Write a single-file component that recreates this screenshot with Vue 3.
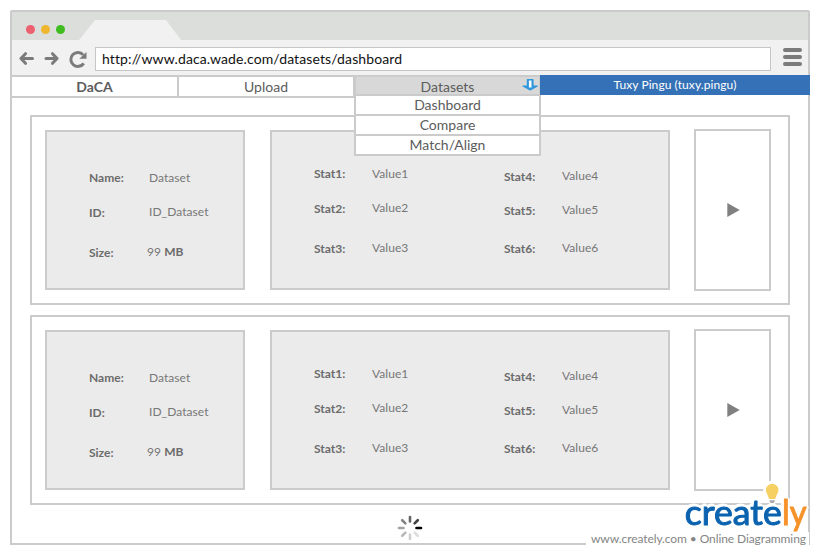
<script setup>
const menu = ['Dashboard', 'Compare', 'Match/Align']
const datasets = [1, 2]
const spokes = ['#000000', '#dddddd', '#cfcfcf', '#b9b9b9', '#a2a2a2', '#858585', '#666666', '#404040']
const statLabelsLeft = ['Stat1:', 'Stat2:', 'Stat3:']
const statValuesLeft = ['Value1', 'Value2', 'Value3']
const statLabelsRight = ['Stat4:', 'Stat5:', 'Stat6:']
const statValuesRight = ['Value4', 'Value5', 'Value6']
</script>

<template>
  <div class="page">
    <div class="browser">
      <header class="titlebar">
        <div class="lights"><i class="red"></i><i class="amber"></i><i class="green"></i></div>
        <div class="tab"></div>
      </header>
      <div class="toolbar">
        <svg class="nav-icons" width="83" height="35" viewBox="0 0 83 35" fill="none" stroke="#7b7b7b" stroke-width="3">
          <path d="M20.5 18.5H9M13.5 13.7L8.9 18.5L13.5 23.3" stroke-linejoin="round" stroke-linecap="round" />
          <path d="M34 18.5H45M40.5 13.7L45.1 18.5L40.5 23.3" stroke-linejoin="round" stroke-linecap="round" />
          <path d="M71.2 14.9A7 7 0 1 0 71.7 23.3" />
          <path d="M74.5 12V18.8H67.3Z" fill="#7b7b7b" stroke="none" />
        </svg>
        <div class="url">http://www.daca.wade.com/datasets/dashboard</div>
        <div class="burger"><i></i><i></i><i></i></div>
      </div>
      <nav class="menubar">
        <div class="item brand">DaCA</div>
        <div class="item upload">Upload</div>
        <div class="drop">
          <div class="drop-head">
            Datasets
            <svg class="arrow" width="18" height="14" viewBox="0 0 18 14">
              <path d="M6.4 1.6H12V8H16.4L9.2 12L2 8H6.4Z" fill="#2f97dc" stroke="#2f97dc" stroke-width="1.2" stroke-linejoin="round" />
              <path d="M7.9 2.5H10.5V9.5H7.9Z" fill="#fff" />
            </svg>
          </div>
          <div class="drop-list">
            <div v-for="m in menu" :key="m" class="drop-item">{{ m }}</div>
          </div>
        </div>
        <div class="user">Tuxy Pingu (tuxy.pingu)</div>
      </nav>
      <main class="content">
        <section v-for="d in datasets" :key="d" class="card">
          <div class="panel info">
            <div class="col labels"><span>Name:</span><span>ID:</span><span>Size:</span></div>
            <div class="col values"><span>Dataset</span><span>ID_Dataset</span><span class="size">99 <b>MB</b></span></div>
          </div>
          <div class="panel stats">
            <div class="col labels"><span v-for="s in statLabelsLeft" :key="s">{{ s }}</span></div>
            <div class="col values"><span v-for="s in statValuesLeft" :key="s">{{ s }}</span></div>
            <div class="col labels right"><span v-for="s in statLabelsRight" :key="s">{{ s }}</span></div>
            <div class="col values right"><span v-for="s in statValuesRight" :key="s">{{ s }}</span></div>
          </div>
          <div class="play">
            <svg width="13" height="14" viewBox="0 0 13 14"><path d="M0.3 0L12.7 7L0.3 14Z" fill="#808080" /></svg>
          </div>
        </section>
        <svg class="spinner" width="26" height="26" viewBox="-13 -13 26 26">
          <line v-for="(c, i) in spokes" :key="i" x1="6.5" y1="0" x2="11" y2="0" :stroke="c" stroke-width="2.6" stroke-linecap="round" :transform="`rotate(${i * 45})`" />
        </svg>
      </main>
    </div>
    <div class="watermark">
      <svg class="logo" width="130" height="56" viewBox="680 480 130 56">
        <path d="M766 490a6.2 6.2 0 0 1 12.4 0c0 3.5-2.4 5-3 9h-6.4c-.6-4-3-5.5-3-9Z" fill="#f6d062" />
        <path d="M769.3 500.3h5.8l-1.3 2.7h-3.2Z" fill="#a8a8a8" />
        <text x="684.8" y="525" class="word blue" textLength="97" lengthAdjust="spacingAndGlyphs">create</text>
        <text x="782" y="525" class="word orange" textLength="24.5" lengthAdjust="spacingAndGlyphs">ly</text>
      </svg>
      <div class="tagline">www.creately.com • Online Diagramming</div>
    </div>
  </div>
</template>

<style>
body { background: #fff; }
</style>

<style scoped>
* { box-sizing: border-box; }
.page { position: relative; width: 820px; height: 555px; padding: 10px; font-family: Lato, "Liberation Sans", sans-serif; color: #5c5c5c; overflow: hidden; }
.browser { width: 800px; height: 535px; border: 2px solid #cbcbcb; border-radius: 2px 2px 0 0; display: flex; flex-direction: column; }
.titlebar { height: 28px; flex: none; background: #dcdedb; display: flex; align-items: flex-end; }
.lights { display: flex; gap: 6px; padding: 0 0 6px 13.5px; width: 67px; }
.lights i { width: 9px; height: 9px; border-radius: 50%; }
.red { background: #ec6070; }
.amber { background: #eeb72f; }
.green { background: #3fbd20; }
.tab { width: 102px; height: 20px; background: #f1f1f1; clip-path: polygon(16px 0, 87px 0, 102px 100%, 0 100%); }
.toolbar { height: 35px; flex: none; background: #f1f1f1; display: flex; align-items: flex-start; }
.nav-icons { flex: none; }
.url { width: 676px; height: 24px; margin-top: 7px; border: 1px solid #c6c6c6; background: #fff; color: #111; font-size: 14px; letter-spacing: 0.12px; line-height: 22px; padding-left: 6px; white-space: nowrap; }
.burger { display: flex; flex-direction: column; gap: 3px; margin: 8px 0 0 12px; }
.burger i { width: 19px; height: 4px; border-radius: 2px; background: #7b7b7b; }
.menubar { height: 23px; flex: none; display: flex; align-items: flex-start; margin-right: -2px; font-size: 14px; text-align: center; }
.item { height: 23px; border: 2px solid #cbcbcb; border-left: 0; line-height: 20px; }
.brand { width: 167px; font-weight: 700; }
.upload { width: 176px; }
.drop { width: 187px; margin-left: -1px; position: relative; z-index: 2; }
.drop-head { height: 19px; border: 2px solid #cbcbcb; border-bottom: 0; background: #d8d8d8; line-height: 20px; position: relative; }
.arrow { position: absolute; right: 0; top: 1px; }
.drop-list { position: absolute; top: 19px; left: 0; width: 187px; height: 62px; border: 2px solid #cbcbcb; background: #fff; display: flex; flex-direction: column; }
.drop-item { height: 20px; line-height: 18px; border-bottom: 2px solid #cbcbcb; }
.drop-item:last-child { border: 0; }
.user { position: relative; z-index: 3; width: 270px; height: 20px; margin-left: -1px; background: #3571b6; color: #fff; font-size: 12px; letter-spacing: 0.08px; line-height: 19px; }
.content { display: flex; flex-direction: column; gap: 10px; padding: 17px 18px 0; }
.card { width: 760px; height: 190px; flex: none; border: 2px solid #cbcbcb; display: flex; padding: 12px 0 0 13px; }
.panel { height: 160px; margin-top: 1px; border: 2px solid #cbcbcb; background: #ebebeb; display: flex; font-size: 12px; line-height: 16px; white-space: nowrap; }
.info { width: 200px; padding: 38px 0 0 42px; }
.stats { width: 400px; margin-left: 25px; padding: 34px 0 0 42px; }
.col { display: flex; flex-direction: column; flex: none; }
.labels { width: 60px; color: #6b6b6b; font-weight: 700; }
.stats .labels { width: 58px; }
.values { color: #777; letter-spacing: 0.06px; }
.stats .values { width: 132px; }
.labels span:nth-child(2) { margin-top: 19px; }
.labels span:nth-child(3) { margin-top: 24px; }
.values span:nth-child(2) { margin-top: 18px; }
.values span:nth-child(3) { margin-top: 24px; }
.values .size { margin-left: -2px; }
.size b { color: #6b6b6b; }
.labels.right { padding-top: 3px; }
.labels.right span:nth-child(2) { margin-top: 18px; }
.labels.right span:nth-child(3) { margin-top: 22px; }
.values.right { padding-top: 2px; }
.values.right span:nth-child(3) { margin-top: 22px; }
.play { width: 77px; height: 162px; margin-left: 24px; border: 2px solid #cbcbcb; display: flex; align-items: center; justify-content: center; padding-left: 2px; }
.spinner { align-self: center; }
.watermark { position: absolute; left: 586px; top: 480px; width: 223px; height: 68px; display: flex; flex-direction: column; align-items: flex-end; }
.logo { flex: none; overflow: visible; margin-right: -1px; filter: drop-shadow(1.5px 1.5px 0 #fff) drop-shadow(-1.5px -1.5px 0 #fff) drop-shadow(1px -1px 0 #fff) drop-shadow(-1px 1px 0 #fff); }
.word { font-family: Lato, sans-serif; font-size: 34.5px; stroke-width: 1px; stroke-linejoin: round; }
.blue { fill: #0b63b0; stroke: #0b63b0; }
.orange { fill: #f6922a; stroke: #f6922a; }
.tagline { background: #fff; width: 223px; height: 14px; margin-top: -4px; padding-left: 5px; font-size: 12px; letter-spacing: -0.09px; line-height: 14px; color: #858585; white-space: nowrap; }
</style>
